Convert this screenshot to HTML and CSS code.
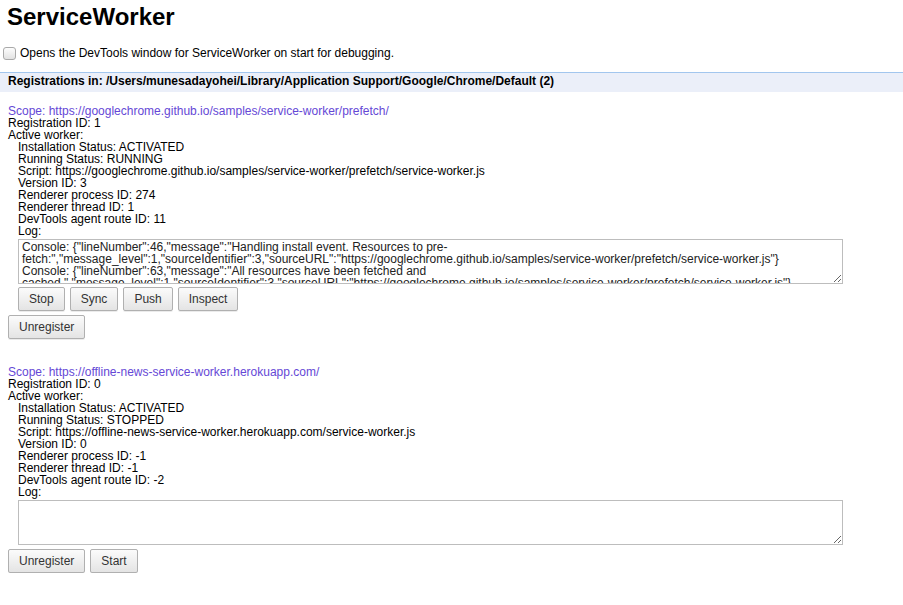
FILE: index.html
```html
<!DOCTYPE html>
<html lang="en">
<head>
  <meta charset="UTF-8">
  <title>ServiceWorker</title>
  <link rel="stylesheet" href="styles.css">
</head>
<body>

<h1>ServiceWorker</h1>

<label class="debug-option">
  <input type="checkbox" class="debug-check">
  Opens the DevTools window for ServiceWorker on start for debugging.
</label>

<div class="registrations-header">Registrations in: /Users/munesadayohei/Library/Application Support/Google/Chrome/Default (2)</div>

<div class="registration">
  <div class="scope">Scope: https://googlechrome.github.io/samples/service-worker/prefetch/</div>
  <div>Registration ID: 1</div>
  <div>Active worker:</div>
  <div class="worker">
    <div>Installation Status: ACTIVATED</div>
    <div>Running Status: RUNNING</div>
    <div>Script: https://googlechrome.github.io/samples/service-worker/prefetch/service-worker.js</div>
    <div>Version ID: 3</div>
    <div>Renderer process ID: 274</div>
    <div>Renderer thread ID: 1</div>
    <div>DevTools agent route ID: 11</div>
    <div>Log:</div>
    <textarea class="log" readonly>Console: {"lineNumber":46,"message":"Handling install event. Resources to pre-fetch:","message_level":1,"sourceIdentifier":3,"sourceURL":"https://googlechrome.github.io/samples/service-worker/prefetch/service-worker.js"}
Console: {"lineNumber":63,"message":"All resources have been fetched and cached.","message_level":1,"sourceIdentifier":3,"sourceURL":"https://googlechrome.github.io/samples/service-worker/prefetch/service-worker.js"}</textarea>
    <div class="actions">
      <button class="btn">Stop</button>
      <button class="btn">Sync</button>
      <button class="btn">Push</button>
      <button class="btn">Inspect</button>
    </div>
  </div>
  <div class="actions">
    <button class="btn">Unregister</button>
  </div>
</div>

<div class="registration">
  <div class="scope">Scope: https://offline-news-service-worker.herokuapp.com/</div>
  <div>Registration ID: 0</div>
  <div>Active worker:</div>
  <div class="worker">
    <div>Installation Status: ACTIVATED</div>
    <div>Running Status: STOPPED</div>
    <div>Script: https://offline-news-service-worker.herokuapp.com/service-worker.js</div>
    <div>Version ID: 0</div>
    <div>Renderer process ID: -1</div>
    <div>Renderer thread ID: -1</div>
    <div>DevTools agent route ID: -2</div>
    <div>Log:</div>
    <textarea class="log" readonly></textarea>
  </div>
  <div class="actions">
    <button class="btn">Unregister</button>
    <button class="btn">Start</button>
  </div>
</div>

</body>
</html>
```

FILE: styles.css
```css
body {
  margin: 0;
  font-family: "Liberation Sans", Arial, sans-serif;
  font-size: 12px;
  line-height: 12px;
  color: #000;
  background: #fff;
}

h1 {
  font-size: 24px;
  line-height: 30px;
  font-weight: bold;
  margin: 2px 0 0 0;
  padding: 0 7px;
}

.debug-option {
  display: flex;
  align-items: center;
  margin-top: 14px;
  padding-left: 3px;
  height: 14px;
}

.debug-check {
  appearance: none;
  -webkit-appearance: none;
  width: 13px;
  height: 13px;
  margin: 0 4px 0 0;
  border: 1px solid #a9a9a9;
  border-radius: 3px;
  background: linear-gradient(#fdfdfd, #e2e2e2);
}

.registrations-header {
  margin-top: 12px;
  border-top: 1px solid #a2c6ee;
  background: #ebeff9;
  font-weight: bold;
  padding: 2px 8px 5px 8px;
  height: 12px;
}

.registration {
  padding: 0 8px;
  margin-top: 13px;
}

.registration + .registration {
  margin-top: 27px;
}

.scope {
  color: #6548d6;
}

.worker {
  padding-left: 10px;
}

.log {
  display: block;
  box-sizing: border-box;
  width: 825px;
  height: 45px;
  margin: 2px 0 0 0;
  padding: 1px 3px;
  border: 1px solid #bdbdbd;
  font-family: "Liberation Sans", Arial, sans-serif;
  font-size: 12px;
  line-height: 12px;
  color: #222;
  overflow: hidden;
  resize: both;
}

.actions {
  display: flex;
  gap: 5px;
  margin-top: 3px;
}

.worker + .actions {
  margin-top: 4px;
}

.btn {
  font-family: "Liberation Sans", Arial, sans-serif;
  font-size: 12px;
  color: #333;
  height: 24px;
  padding: 0 10px;
  border: 1px solid #b0b0b0;
  border-radius: 2px;
  background: linear-gradient(#fbfbfb, #e4e4e4);
  box-shadow: 0 1px 0 rgba(0, 0, 0, 0.08);
}
```
